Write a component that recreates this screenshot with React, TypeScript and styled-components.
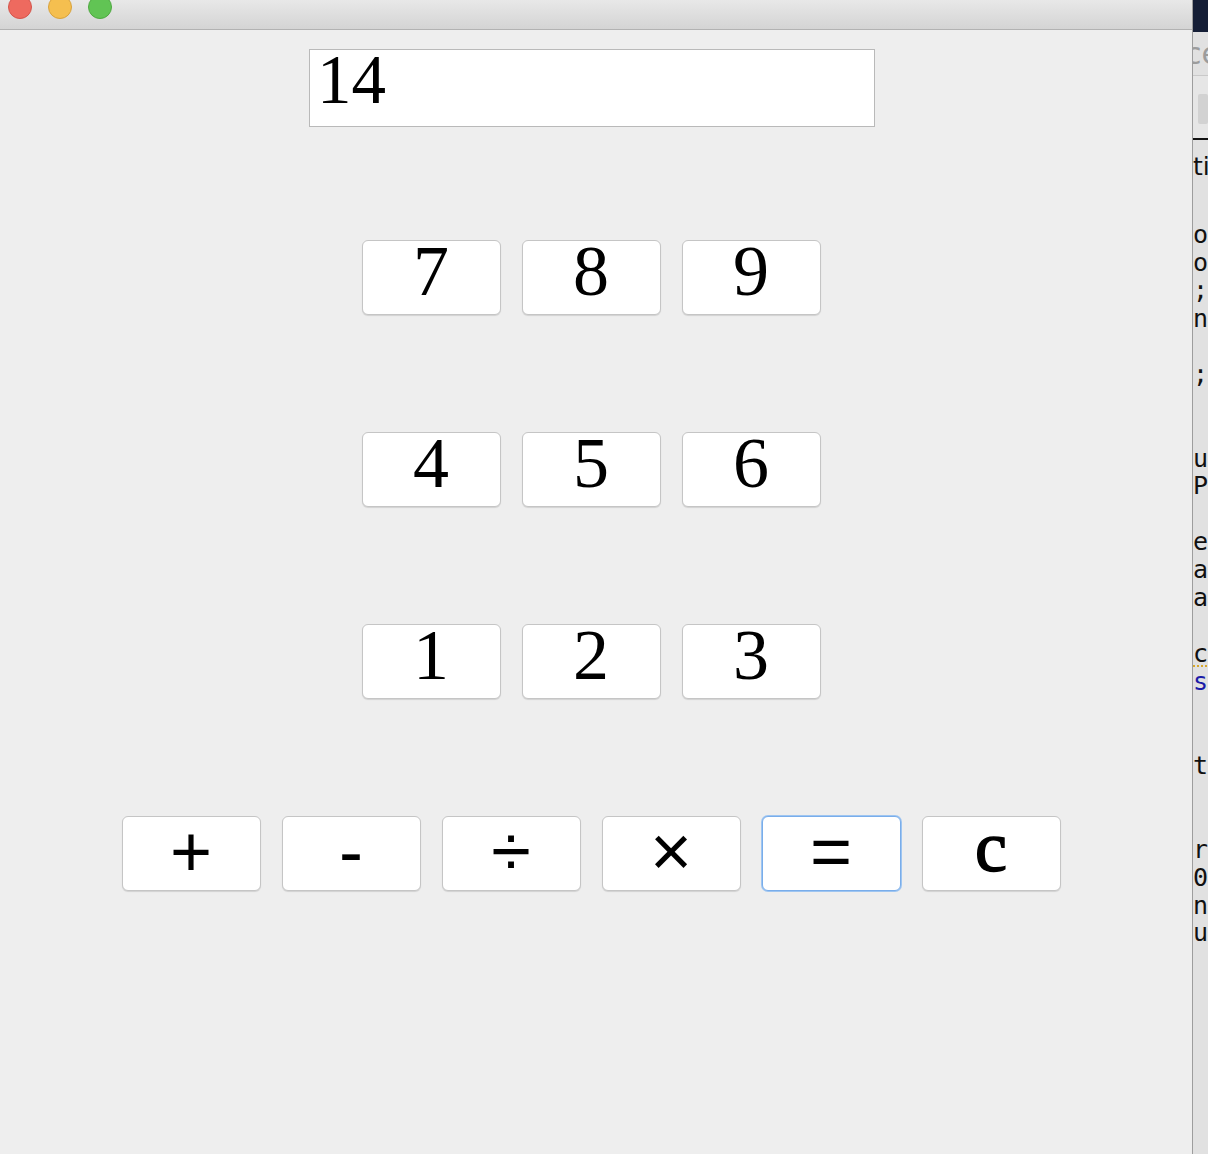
import React from 'react';
import styled, { createGlobalStyle } from 'styled-components';

const Global = createGlobalStyle`
  html, body { margin: 0; padding: 0; background: #eeeeee; }
  body { width: 1208px; height: 1154px; overflow: hidden; }
`;

const Desktop = styled.div`
  display: flex;
  width: 1208px;
  height: 1154px;
  overflow: hidden;
`;

const MainWindow = styled.div`
  width: 1192px;
  flex: none;
  display: flex;
  flex-direction: column;
  background: #eeeeee;
`;

const TitleBar = styled.div`
  height: 29px;
  flex: none;
  border-bottom: 1px solid #b2b2b2;
  background: linear-gradient(#e8e8e8, #d4d4d4);
  display: flex;
  align-items: flex-start;
  gap: 16px;
  padding-left: 8px;
  overflow: hidden;
`;

const Light = styled.span<{ $c: string; $b: string }>`
  width: 24px;
  height: 24px;
  box-sizing: border-box;
  border-radius: 50%;
  margin-top: -5px;
  background: ${(p) => p.$c};
  border: 1px solid ${(p) => p.$b};
`;

const Content = styled.div`
  flex: 1;
  display: flex;
  flex-direction: column;
  align-items: center;
  padding: 19px 10px 0 0;
`;

const Display = styled.input`
  width: 566px;
  height: 78px;
  box-sizing: border-box;
  margin: 0 0 113px 2px;
  border: 1px solid #b9b9b9;
  background: #ffffff;
  padding: 0 0 15px 7px;
  font-family: 'Liberation Serif', 'Times New Roman', serif;
  font-size: 69px;
  line-height: 64px;
  color: #000;
  outline: none;
`;

const Row = styled.div`
  display: flex;
  gap: 21px;
  margin-bottom: 117px;
`;

const Key = styled.button<{ $focused?: boolean; $op?: boolean; $heavy?: boolean }>`
  width: 139px;
  height: 75px;
  box-sizing: border-box;
  padding: 0 0 ${(p) => (p.$op ? '5px' : '14px')} 0;
  margin: 0;
  display: flex;
  align-items: center;
  justify-content: center;
  background: #ffffff;
  border: 1px solid ${(p) => (p.$focused ? '#79adea' : '#c5c5c5')};
  border-radius: 6px;
  box-shadow: ${(p) =>
    p.$focused ? '0 0 0 1px #9ec5f1' : '0 1px 1px rgba(0, 0, 0, 0.12)'};
  font-family: ${(p) =>
    p.$op
      ? "'Liberation Sans', Arial, sans-serif"
      : "'Liberation Serif', 'Times New Roman', serif"};
  font-weight: 400;
  -webkit-text-stroke: ${(p) => (p.$heavy ? '1.6px #000' : '0')};
  font-size: 72px;
  line-height: 64px;
  color: #000;
  cursor: default;
`;

const SideWindow = styled.div`
  flex: 1;
  min-width: 0;
  border-left: 1px solid #9d9d9d;
  background: #e1e1e1;
  display: flex;
  flex-direction: column;
  overflow: hidden;
`;

const SideTop = styled.div`
  height: 32px;
  flex: none;
  background: #151e36;
`;

const SideTitle = styled.div`
  height: 43px;
  flex: none;
  border-bottom: 1px solid #c9c9c9;
  font-family: 'DejaVu Sans', sans-serif;
  font-size: 30px;
  line-height: 44px;
  color: #9c9c9c;
  white-space: nowrap;
  overflow: hidden;
  text-indent: -8px;
`;

const SideTools = styled.div`
  height: 64px;
  flex: none;
  border-bottom: 2px solid #111;
  background: #e6e6e6;
  display: flex;
  align-items: flex-start;
  padding-top: 18px;
  box-sizing: border-box;
`;

const ToolIcon = styled.span`
  width: 10px;
  height: 30px;
  margin-left: 5px;
  background: #d2d2d2;
  border-radius: 2px;
`;

const CodeArea = styled.div`
  flex: 1;
  display: flex;
  flex-direction: column;
  padding-top: 13px;
  font-family: 'DejaVu Sans Mono', monospace;
  font-size: 25px;
  color: #111;
  white-space: pre;
`;

const HeaderLine = styled.div`
  font-family: 'DejaVu Sans', sans-serif;
  height: 28px;
  line-height: 28px;
  margin-bottom: 40px;
`;

const CodeLine = styled.div<{ $color?: string; $warn?: boolean }>`
  height: 27.94px;
  line-height: 28px;
  color: ${(p) => p.$color || '#111'};
  span {
    text-decoration: ${(p) => (p.$warn ? 'underline dotted #d6a72c 2px' : 'none')};
    text-underline-offset: 3px;
  }
`;

const codeLines: { t: string; c?: string; w?: boolean }[] = [
  { t: 'o' }, { t: 'o' }, { t: ';' }, { t: 'n' }, { t: '' }, { t: ';' },
  { t: '' }, { t: '' }, { t: 'u' }, { t: 'P' }, { t: '' }, { t: 'e' },
  { t: 'a' }, { t: 'a' }, { t: '' }, { t: 'c', w: true }, { t: 's', c: '#1c1ca8' },
  { t: '' }, { t: '' }, { t: 't' }, { t: '' }, { t: '' }, { t: 'r' },
  { t: '0' }, { t: 'n' }, { t: 'u' },
];

const rows = [
  ['7', '8', '9'],
  ['4', '5', '6'],
  ['1', '2', '3'],
];
const ops = ['+', '-', '÷', '×', '=', 'c'];

export default function App() {
  return (
    <>
      <Global />
      <Desktop>
        <MainWindow>
          <TitleBar>
            <Light $c="#ee6a5f" $b="#d4544a" />
            <Light $c="#f5bf4f" $b="#d8a23c" />
            <Light $c="#61c454" $b="#4ea840" />
          </TitleBar>
          <Content>
            <Display readOnly value="14" />
            {rows.map((r, i) => (
              <Row key={i}>
                {r.map((k) => (
                  <Key key={k}>{k}</Key>
                ))}
              </Row>
            ))}
            <Row>
              {ops.map((k) => (
                <Key key={k} $focused={k === '='} $op={k !== 'c'} $heavy={k === 'c'}>
                  {k}
                </Key>
              ))}
            </Row>
          </Content>
        </MainWindow>
        <SideWindow>
          <SideTop />
          <SideTitle>ce</SideTitle>
          <SideTools>
            <ToolIcon />
          </SideTools>
          <CodeArea>
            <HeaderLine>ti</HeaderLine>
            {codeLines.map((l, i) => (
              <CodeLine key={i} $color={l.c} $warn={l.w}>
                <span>{l.t}</span>
              </CodeLine>
            ))}
          </CodeArea>
        </SideWindow>
      </Desktop>
    </>
  );
}
